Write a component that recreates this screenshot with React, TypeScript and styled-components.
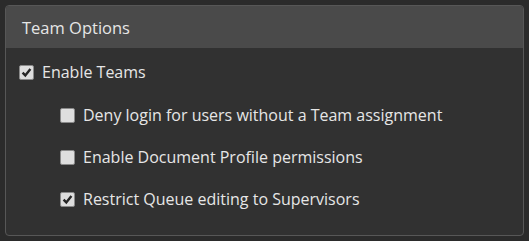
import { useState } from 'react';
import styled, { createGlobalStyle } from 'styled-components';

const GlobalStyle = createGlobalStyle`
  html, body {
    margin: 0;
    background: #2b2b2b;
    font-family: 'Open Sans', 'Liberation Sans', sans-serif;
  }
`;

interface OptionType {
  id: string;
  label: string;
  checked: boolean;
}

const SUB_OPTIONS: OptionType[] = [
  { id: 'deny', label: 'Deny login for users without a Team assignment', checked: false },
  { id: 'profile', label: 'Enable Document Profile permissions', checked: false },
  { id: 'queue', label: 'Restrict Queue editing to Supervisors', checked: true },
];

const Check = ({ checked }: { checked: boolean }) => (
  <Box>
    {checked && (
      <svg width="11" height="11" viewBox="0 0 11 11">
        <path d="M1.6 5.6 L4.3 8.4 L9.4 2" fill="none" stroke="#262626" strokeWidth="2.4" />
      </svg>
    )}
  </Box>
);

const App = () => {
  const [enabled, setEnabled] = useState(true);
  const [options, setOptions] = useState(SUB_OPTIONS);

  const toggle = (id: string) =>
    setOptions((prev) => prev.map((o) => (o.id === id ? { ...o, checked: !o.checked } : o)));

  return (
    <>
      <GlobalStyle />
      <Page>
        <Panel>
          <Header>Team Options</Header>
          <Body>
            <Row onClick={() => setEnabled(!enabled)}>
              <Check checked={enabled} />
              <Label>Enable Teams</Label>
            </Row>
            <SubList>
              {options.map((o) => (
                <Row key={o.id} onClick={() => toggle(o.id)}>
                  <Check checked={o.checked} />
                  <Label>{o.label}</Label>
                </Row>
              ))}
            </SubList>
          </Body>
        </Panel>
      </Page>
    </>
  );
};

const Page = styled.div`
  padding: 5px;
`;

const Panel = styled.div`
  width: 519px;
  height: 231px;
  box-sizing: border-box;
  border: 1px solid #575757;
  border-radius: 4px;
  background: #313131;
  overflow: hidden;
  display: flex;
  flex-direction: column;
`;

const Header = styled.div`
  height: 42px;
  flex-shrink: 0;
  display: flex;
  align-items: center;
  padding-left: 16px;
  background: #4a4a4a;
  color: #e6e6e6;
  font-size: 16.5px;
`;

const Body = styled.div`
  padding: 13px 0 0 13px;
  display: flex;
  flex-direction: column;
`;

const SubList = styled.div`
  display: flex;
  flex-direction: column;
  gap: 20px;
  padding: 21px 0 0 41px;
`;

const Row = styled.div`
  display: flex;
  align-items: center;
  height: 22px;
  cursor: pointer;
`;

const Box = styled.span`
  width: 13px;
  height: 13px;
  border: 1px solid #8a8a8a;
  border-radius: 2px;
  background: #dedede;
  display: flex;
  align-items: center;
  justify-content: center;
  flex-shrink: 0;
`;

const Label = styled.span`
  margin-left: 8px;
  color: #e6e6e6;
  font-size: 16px;
`;

export default App;
